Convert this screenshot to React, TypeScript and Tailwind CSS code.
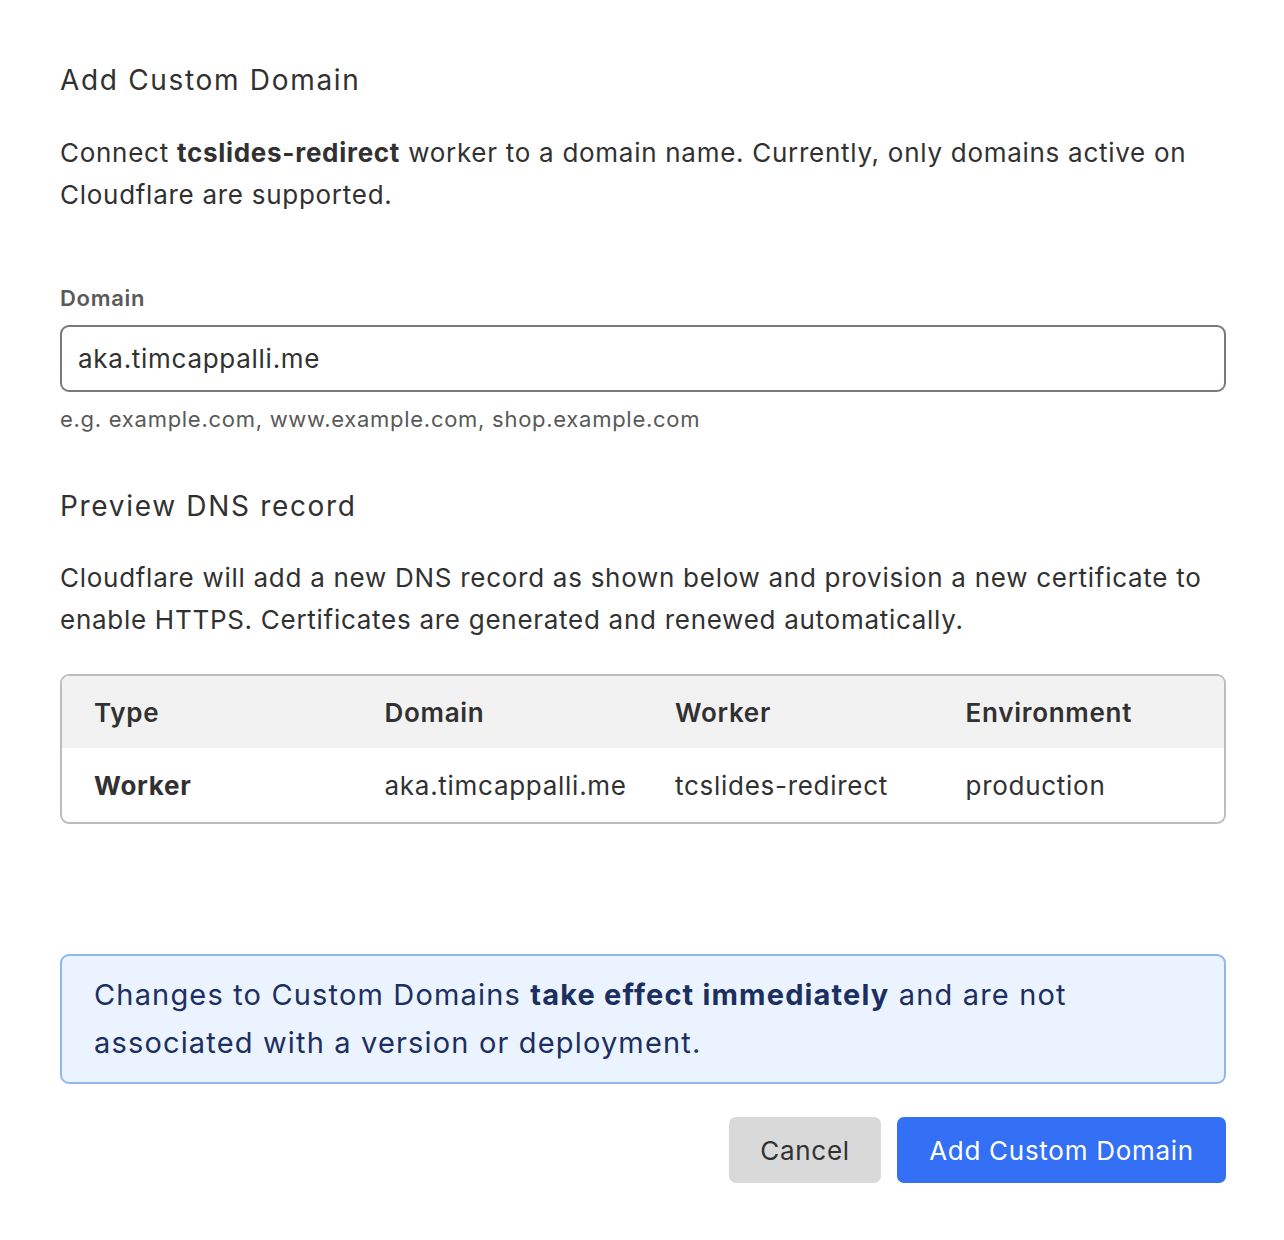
export default function App() {
  const cols = ['Type', 'Domain', 'Worker', 'Environment'];
  const row = ['Worker', 'aka.timcappalli.me', 'tcslides-redirect', 'production'];

  return (
    <div className="min-h-[1240px] w-[1284px] bg-white text-[#313131] tracking-[0.045em] [font-family:Inter,'Noto_Sans',sans-serif]">
      <div className="flex flex-col pl-[60px] pr-[58px] pt-[60px]">
        <h2 className="text-[28px] leading-[40px] font-normal tracking-[0.06em]">Add Custom Domain</h2>
        <p className="mt-[32px] text-[26px] leading-[42px]">
          Connect <strong className="font-bold">tcslides-redirect</strong> worker to a domain name. Currently, only domains active on
          Cloudflare are supported.
        </p>

        <label className="mt-[67px] text-[22px] leading-[30px] font-semibold text-[#595959]">Domain</label>
        <div className="mt-[12px] flex h-[67px] items-center rounded-[9px] border-2 border-[#7a7a7a] px-[16px]">
          <span className="text-[26px]">aka.timcappalli.me</span>
        </div>
        <p className="mt-[12px] text-[22px] leading-[30px] text-[#595959]">e.g. example.com, www.example.com, shop.example.com</p>

        <h2 className="mt-[52px] text-[28px] leading-[40px] font-normal tracking-[0.06em]">Preview DNS record</h2>
        <p className="mt-[31px] text-[26px] leading-[42px]">
          Cloudflare will add a new DNS record as shown below and provision a new certificate to enable HTTPS. Certificates are generated and renewed automatically.
        </p>

        <div className="mt-[33px] overflow-hidden rounded-[9px] border-2 border-[#bdbdbd]">
          <div className="grid h-[72px] grid-cols-4 items-center bg-[#f2f2f2]">
            {cols.map((c) => (
              <div key={c} className="px-[32px] text-[26px] font-semibold">{c}</div>
            ))}
          </div>
          <div className="grid h-[74px] grid-cols-4 items-center">
            {row.map((c, i) => (
              <div key={c} className={i === 0 ? 'px-[32px] text-[26px] font-bold' : 'px-[32px] text-[26px]'}>{c}</div>
            ))}
          </div>
        </div>

        <div className="mt-[130px] rounded-[9px] border-2 border-[#8fb7f5] bg-[#ebf3fe] px-[32px] py-[15px] text-[29px] leading-[48px] tracking-[0.04em] text-[#1c2f61]">
          Changes to Custom Domains <strong className="font-bold">take effect immediately</strong> and are not associated with a version or deployment.
        </div>

        <div className="mt-[33px] flex justify-end gap-[16px]">
          <button className="h-[66px] w-[152px] rounded-[7px] bg-[#d9d9d9] text-[26px] text-[#313131]">Cancel</button>
          <button className="h-[66px] w-[329px] rounded-[7px] bg-[#3370f5] text-[26px] text-white">Add Custom Domain</button>
        </div>
      </div>
    </div>
  );
}
